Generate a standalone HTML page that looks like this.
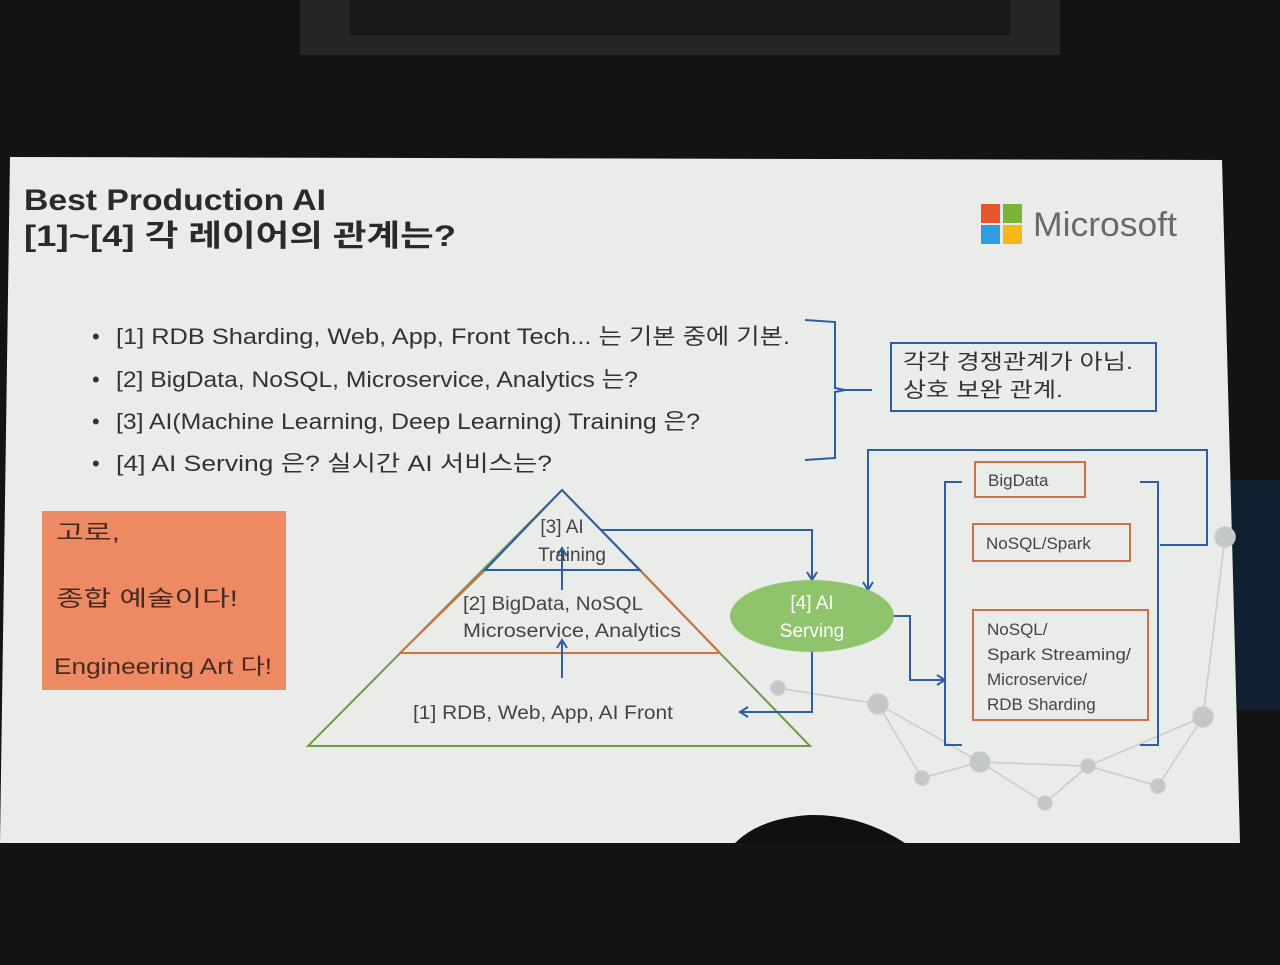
<!DOCTYPE html>
<html><head><meta charset="utf-8"><style>
body{margin:0;width:1280px;height:960px;background:#121212;overflow:hidden;font-family:"Liberation Sans","Noto Sans CJK KR",sans-serif}
svg text{font-family:"Liberation Sans","Noto Sans CJK KR",sans-serif}
</style></head><body>
<svg width="1280" height="960" viewBox="0 0 1280 960" xmlns="http://www.w3.org/2000/svg">
<rect width="1280" height="960" fill="#131313"/>
<rect x="300" y="0" width="760" height="55" fill="#252525"/>
<rect x="350" y="0" width="660" height="35" fill="#181818"/>
<rect x="1225" y="480" width="55" height="230" fill="#0f2a44" opacity="0.6"/>
<polygon points="10,157 1222,160 1240,843 0,843" fill="#eaecea"/>
<path d="M735,843 Q760,818 810,815 Q860,814 905,843 Z" fill="#101010"/>
<!-- network decoration -->
<g stroke="#c9cccc" stroke-width="1.5" fill="#c4c7c7">
<line x1="778" y1="688" x2="878" y2="704"/><line x1="878" y1="704" x2="922" y2="778"/><line x1="922" y1="778" x2="980" y2="762"/><line x1="980" y1="762" x2="1045" y2="803"/><line x1="1045" y1="803" x2="1088" y2="766"/><line x1="1088" y1="766" x2="1158" y2="786"/><line x1="1158" y1="786" x2="1203" y2="717"/><line x1="1203" y1="717" x2="1225" y2="537"/><line x1="980" y1="762" x2="1088" y2="766"/><line x1="878" y1="704" x2="980" y2="762"/><line x1="1088" y1="766" x2="1203" y2="717"/>
<circle cx="778" cy="688" r="7"/><circle cx="878" cy="704" r="10"/><circle cx="922" cy="778" r="7"/><circle cx="980" cy="762" r="10"/><circle cx="1045" cy="803" r="7"/><circle cx="1088" cy="766" r="7"/><circle cx="1158" cy="786" r="7"/><circle cx="1203" cy="717" r="10"/><circle cx="1225" cy="537" r="10"/>
</g>
<text x="24" y="210" font-size="30" font-weight="bold" fill="#2a2a2a" textLength="302" lengthAdjust="spacingAndGlyphs">Best Production AI</text>
<text x="24" y="246" font-size="30" font-weight="bold" fill="#2a2a2a" textLength="432" lengthAdjust="spacingAndGlyphs">[1]~[4] 각 레이어의 관계는?</text>
<rect x="981" y="204" width="19" height="19" fill="#e8542d"/><rect x="1003" y="204" width="19" height="19" fill="#7cb33a"/>
<rect x="981" y="225" width="19" height="19" fill="#2f9ee0"/><rect x="1003" y="225" width="19" height="19" fill="#f6b813"/>
<text x="1033" y="236" font-size="34" fill="#6a6a6a" textLength="144" lengthAdjust="spacingAndGlyphs">Microsoft</text>
<g font-size="22" fill="#333">
<text x="92" y="344">•</text><text x="116" y="344" textLength="674" lengthAdjust="spacingAndGlyphs">[1] RDB Sharding, Web, App, Front Tech... 는 기본 중에 기본.</text>
<text x="92" y="387">•</text><text x="116" y="387" textLength="522" lengthAdjust="spacingAndGlyphs">[2] BigData, NoSQL, Microservice, Analytics 는?</text>
<text x="92" y="429">•</text><text x="116" y="429" textLength="584" lengthAdjust="spacingAndGlyphs">[3] AI(Machine Learning, Deep Learning) Training 은?</text>
<text x="92" y="471">•</text><text x="116" y="471" textLength="436" lengthAdjust="spacingAndGlyphs">[4] AI Serving 은? 실시간 AI 서비스는?</text>
</g>
<path d="M805,320 L835,322 L835,388 L845,390 L835,392 L835,458 L805,460" stroke="#2d5ca8" stroke-width="2" fill="none"/>
<line x1="845" y1="390" x2="872" y2="390" stroke="#2d5ca8" stroke-width="2"/>
<rect x="891" y="343" width="265" height="68" fill="none" stroke="#2d5ca8" stroke-width="2"/>
<text x="903" y="369" font-size="21" fill="#333" textLength="230" lengthAdjust="spacingAndGlyphs">각각 경쟁관계가 아님.</text>
<text x="903" y="397" font-size="21" fill="#333" textLength="160" lengthAdjust="spacingAndGlyphs">상호 보완 관계.</text>
<rect x="42" y="511" width="244" height="179" fill="#ee8a63"/>
<g font-size="22" fill="#4a2a20">
<text x="56" y="540" textLength="64" lengthAdjust="spacingAndGlyphs">고로,</text><text x="56" y="606" textLength="182" lengthAdjust="spacingAndGlyphs">종합 예술이다!</text><text x="54" y="674" textLength="218" lengthAdjust="spacingAndGlyphs">Engineering Art 다!</text>
</g>
<!-- pyramid -->
<polygon points="308,746 810,746 562,490" fill="none" stroke="#6f9a4a" stroke-width="2"/>
<line x1="400" y1="653" x2="720" y2="653" stroke="#d07040" stroke-width="2"/>
<line x1="400" y1="653" x2="485" y2="570" stroke="#d07040" stroke-width="2"/>
<line x1="720" y1="653" x2="640" y2="570" stroke="#d07040" stroke-width="2"/>
<polygon points="485,570 640,570 562,490" fill="none" stroke="#2d5ca8" stroke-width="2"/>
<g stroke="#2d5ca8" stroke-width="2" fill="none">
<line x1="562" y1="678" x2="562" y2="642"/><path d="M557,648 L562,640 L567,648"/>
<line x1="562" y1="590" x2="562" y2="550"/><path d="M557,556 L562,548 L567,556"/>
<path d="M600,530 L812,530 L812,578"/><path d="M807,572 L812,580 L817,572"/>
<path d="M812,650 L812,712 L742,712"/><path d="M748,707 L740,712 L748,717"/>
<path d="M893,616 L910,616 L910,680 L943,680"/><path d="M937,675 L945,680 L937,685"/>
<path d="M1160,545 L1207,545 L1207,450 L868,450 L868,588"/><path d="M863,582 L868,590 L873,582"/>
</g>
<g font-size="19" fill="#444" text-anchor="middle">
<text x="562" y="533">[3] AI</text><text x="572" y="561">Training</text>
<text x="553" y="610" textLength="180" lengthAdjust="spacingAndGlyphs">[2] BigData, NoSQL</text><text x="572" y="637" textLength="218" lengthAdjust="spacingAndGlyphs">Microservice, Analytics</text>
<text x="543" y="719" textLength="260" lengthAdjust="spacingAndGlyphs">[1] RDB, Web, App, AI Front</text>
</g>
<ellipse cx="812" cy="616" rx="82" ry="36" fill="#90c46c"/>
<text x="812" y="609" font-size="19" fill="#fff" text-anchor="middle">[4] AI</text>
<text x="812" y="637" font-size="19" fill="#fff" text-anchor="middle">Serving</text>
<g stroke="#2d5ca8" stroke-width="2" fill="none">
<path d="M962,482 L945,482 L945,745 L962,745"/><path d="M1140,482 L1158,482 L1158,745 L1140,745"/>
</g>
<g stroke="#d0704a" stroke-width="2" fill="none">
<rect x="975" y="462" width="110" height="35"/><rect x="973" y="524" width="157" height="37"/><rect x="973" y="610" width="175" height="110"/>
</g>
<g font-size="17" fill="#444">
<text x="988" y="486">BigData</text><text x="986" y="549">NoSQL/Spark</text>
<text x="987" y="635">NoSQL/</text><text x="987" y="660" textLength="144" lengthAdjust="spacingAndGlyphs">Spark Streaming/</text><text x="987" y="685">Microservice/</text><text x="987" y="710">RDB Sharding</text>
</g>
</svg>
</body></html>
